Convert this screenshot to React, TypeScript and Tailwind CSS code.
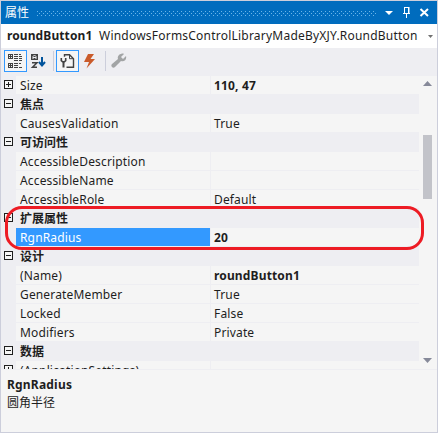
import React from "react";

type Row = { name: string; value?: string; category?: boolean; bold?: boolean; expand?: "plus" | "minus"; selected?: boolean };

const rows: Row[] = [
  { name: "Size", value: "110, 47", bold: true, expand: "plus" },
  { name: "焦点", category: true, expand: "minus" },
  { name: "CausesValidation", value: "True" },
  { name: "可访问性", category: true, expand: "minus" },
  { name: "AccessibleDescription" },
  { name: "AccessibleName" },
  { name: "AccessibleRole", value: "Default" },
  { name: "扩展属性", category: true, expand: "minus" },
  { name: "RgnRadius", value: "20", bold: true, selected: true },
  { name: "设计", category: true, expand: "minus" },
  { name: "(Name)", value: "roundButton1", bold: true },
  { name: "GenerateMember", value: "True" },
  { name: "Locked", value: "False" },
  { name: "Modifiers", value: "Private" },
  { name: "数据", category: true, expand: "minus" },
  { name: "(ApplicationSettings)", expand: "plus" },
];

function Expander({ kind }: { kind: "plus" | "minus" }) {
  return (
    <svg width="9" height="9" viewBox="0 0 9 9" shapeRendering="crispEdges" className="ml-[3px] mt-1 block">
      <rect x=".5" y=".5" width="8" height="8" fill="#f5f5f5" stroke="#1e1e1e" />
      <path d={kind === "plus" ? "M2 4.5h5M4.5 2v5" : "M2 4.5h5"} stroke="#1e1e1e" />
    </svg>
  );
}

function PropertyRow({ row }: { row: Row }) {
  return (
    <div className="flex h-[19px] shrink-0">
      <div className="w-[15px] shrink-0">{row.expand && <Expander kind={row.expand} />}</div>
      {row.category ? (
        <div className="pl-1 font-bold leading-[19px]">{row.name}</div>
      ) : (
        <>
          <div className={`h-[18px] w-[194px] shrink-0 pl-1 leading-[19px] tracking-[0.15px] ${row.selected ? "bg-[#3399ff] text-white" : "bg-[#f5f5f5]"}`}>{row.name}</div>
          <div className={`ml-px h-[18px] flex-1 bg-[#f5f5f5] pl-[3px] leading-[19px] tracking-[0.15px] ${row.bold ? "font-bold" : ""}`}>{row.value}</div>
        </>
      )}
    </div>
  );
}

export default function App() {
  return (
    <div className="relative flex h-[433px] w-[438px] flex-col overflow-hidden whitespace-nowrap border border-[#cccedb] bg-[#eeeef2] font-['Noto_Sans','Noto_Sans_CJK_SC',sans-serif] text-[12px] text-[#1e1e1e]">
      <header className="flex h-[23px] shrink-0 items-center bg-[#006cbe] pl-1 text-white">
        <span className="w-8 leading-[22px]">属性</span>
        <svg width="340" height="5" className="mt-px block" shapeRendering="crispEdges">
          <defs>
            <pattern id="grip" width="4" height="4" patternUnits="userSpaceOnUse">
              <path d="M0 0h1v1H0zM2 2h1v1H2z" fill="#6bb5e8" />
            </pattern>
          </defs>
          <rect width="340" height="5" fill="url(#grip)" />
        </svg>
        <svg width="52" height="13" viewBox="0 0 52 13" className="ml-2 block">
          <path d="M0 5h8L4 9z" fill="#fff" />
          <path d="M19.5 1.5h4v6M19.5 1v6M18 7.5h7M21.5 8v4" fill="none" stroke="#fff" />
          <path d="M23 1h1.5v6H23z" fill="#fff" />
          <path d="m35.5 3 7.5 7m0-7-7.5 7" stroke="#fff" strokeWidth="2" />
        </svg>
      </header>
      <div className="flex h-6 shrink-0 items-center bg-white pl-1.5">
        <span className="w-[92px] shrink-0 font-bold tracking-[0.1px]">roundButton1</span>
        <span className="w-[329px] shrink-0 tracking-[0.22px]">WindowsFormsControlLibraryMadeByXJY.RoundButton</span>
        <svg width="5" height="3" className="mt-px block shrink-0"><path d="M0 0h5L2.5 3z" fill="#717171" /></svg>
      </div>
      <div className="flex h-7 shrink-0 items-start pl-[3px] pt-[2px]">
        <div className="flex h-[22px] w-[23px] items-center justify-center border border-[#3399ff] bg-[#f5f5f5]">
          <svg width="15" height="16" viewBox="0 0 15 16" shapeRendering="crispEdges" fill="none" stroke="#424242">
            <path d="M.5 1.5h4v4h-4zM.5 10.5h4v4h-4zM1 3.5h3M2.5 2v3M1 12.5h3M2.5 11v3" />
            <path d="M6 1.5h4M6 3.5h4M6 5.5h4M6 7.5h4M6 10.5h4M6 12.5h4M6 14.5h4M11 1.5h2M11 3.5h3M11 5.5h3M11 7.5h3M11 10.5h2M11 14.5h3" />
          </svg>
        </div>
        <svg width="16" height="18" viewBox="0 0 16 18" className="ml-[3px] mt-[3px] block">
          <path d="M1 1h7v6H1z" fill="#424242" />
          <path d="M3 6V3.5L4.5 2 6 3.5V6M3 4.5h3" stroke="#eeeef2" fill="none" />
          <path d="M2 9.7h5L2.5 14.3H7" stroke="#424242" strokeWidth="1.5" fill="none" />
          <path d="M12 4v9M9 9l3 3.5L15 9" stroke="#00539c" strokeWidth="2" fill="none" />
        </svg>
        <div className="ml-[7px] mt-px h-5 w-px bg-[#cccedb]" />
        <div className="ml-[2px] flex h-[22px] w-[23px] items-center justify-center border border-[#3399ff] bg-[#f5f5f5]">
          <svg width="15" height="16" viewBox="0 0 15 16" fill="none" stroke="#424242">
            <path d="M4.5 3.8V1.7h5l4 4v8.6H6.5" strokeWidth="1.4" />
            <path d="M9.5 1.5v4.2h4" />
            <path d="M1.3 5v2.6l1.2 1.2h2l1.2-1.2V5" strokeWidth="1.6" />
            <path d="M3.5 9v5.5" strokeWidth="2" />
          </svg>
        </div>
        <svg width="13" height="15" viewBox="0 0 13 15" className="ml-[5px] mt-1 block"><path d="M4 0h6L6.5 5H11L2.5 14.5 5 8H0z" fill="#ca5b2b" /></svg>
        <div className="ml-2 mt-px h-5 w-px bg-[#cccedb]" />
        <svg width="16" height="16" viewBox="0 0 16 16" className="ml-[5px] mt-[3px] block">
          <path d="M10 1c2-1 3 0 3 0l-3 3 2 2 3-3c1 4-2 6-5 5l-6 6c-2 2-5-1-3-3l6-5c-1-2 1-5 3-5z" fill="#a2a4a5" />
        </svg>
      </div>
      <div className="flex h-[293px] shrink-0">
        <div className="flex w-[418px] shrink-0 flex-col overflow-hidden">
          {rows.map((row) => <PropertyRow key={row.name} row={row} />)}
        </div>
        <div className="flex flex-1 flex-col bg-[#f5f5f5] pl-1">
          <svg width="9" height="5" className="mt-[5px] block"><path d="M0 5 4.5 0 9 5z" fill="#868999" /></svg>
          <div className="mt-[49px] h-16 w-[9px] bg-[#c2c3c9]" />
          <svg width="9" height="5" className="mb-1.5 mt-auto block"><path d="M0 0h9L4.5 5z" fill="#868999" /></svg>
        </div>
      </div>
      <div className="flex-1 border-t border-[#eeeef2] bg-[#f5f5f5] pl-1.5 pt-1.5">
        <div className="font-bold leading-[18px] tracking-[0.2px]">RgnRadius</div>
        <div className="leading-[18px]">圆角半径</div>
      </div>
      <div className="absolute left-1 top-[205px] h-[44px] w-[419px] rounded-[17px] border-[3px] border-[#ed1c24]" />
    </div>
  );
}
